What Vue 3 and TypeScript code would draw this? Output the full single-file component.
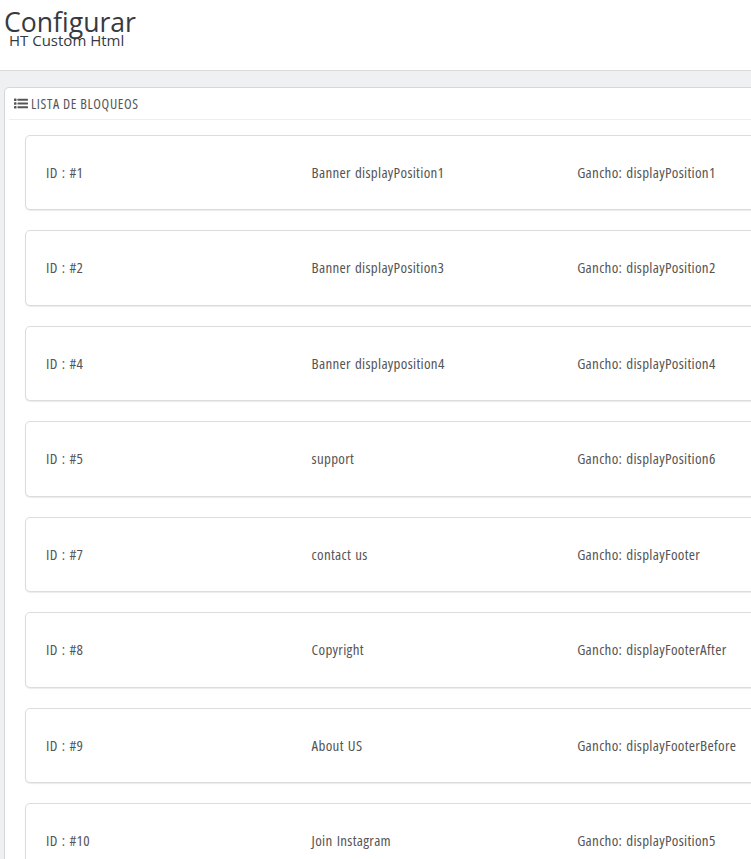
<script setup lang="ts">
interface Block { id: number; name: string; hook: string }
const blocks: Block[] = [
  { id: 1, name: 'Banner displayPosition1', hook: 'displayPosition1' },
  { id: 2, name: 'Banner displayPosition3', hook: 'displayPosition2' },
  { id: 4, name: 'Banner displayposition4', hook: 'displayPosition4' },
  { id: 5, name: 'support', hook: 'displayPosition6' },
  { id: 7, name: 'contact us', hook: 'displayFooter' },
  { id: 8, name: 'Copyright', hook: 'displayFooterAfter' },
  { id: 9, name: 'About US', hook: 'displayFooterBefore' },
  { id: 10, name: 'Join Instagram', hook: 'displayPosition5' },
]
</script>

<template>
  <div class="page">
    <header class="head">
      <h1>Configurar</h1>
      <p>HT Custom Html</p>
    </header>
    <main class="content">
      <section class="panel">
        <div class="panel-head">
          <svg class="icon" width="14" height="11" viewBox="0 0 14 11" aria-hidden="true">
            <rect x="0" y="0.5" width="2.5" height="2.5" rx="0.6" />
            <rect x="0" y="4.25" width="2.5" height="2.5" rx="0.6" />
            <rect x="0" y="8" width="2.5" height="2.5" rx="0.6" />
            <rect x="3.5" y="0.75" width="10.5" height="2" rx="0.4" />
            <rect x="3.5" y="4.5" width="10.5" height="2" rx="0.4" />
            <rect x="3.5" y="8.25" width="10.5" height="2" rx="0.4" />
          </svg>
          <span>LISTA DE BLOQUEOS</span>
        </div>
        <div class="list">
          <article v-for="b in blocks" :key="b.id" class="row">
            <div class="cell">ID : #{{ b.id }}</div>
            <div class="cell">{{ b.name }}</div>
            <div class="cell">Gancho: {{ b.hook }}</div>
          </article>
        </div>
      </section>
    </main>
  </div>
</template>

<style>
html, body { margin: 0; background: #fff; }
</style>

<style scoped>
.page {
  width: 751px;
  height: 859px;
  overflow: hidden;
  background: #eff0f2;
}
.head {
  height: 70px;
  background: #fff;
  border-bottom: 1px solid #d9dadc;
  font-family: "Open Sans", sans-serif;
  color: #363a41;
  position: relative;
}
.head h1 {
  margin: 0;
  padding: 4px 0 0 4px;
  font-size: 26.6px;
  line-height: 36px;
  font-weight: 400;
}
.head p {
  margin: -10px 0 0 9px;
  font-size: 15px;
  line-height: 20px;
}
.content {
  padding: 16px 0 0 4px;
}
.panel {
  width: 860px;
  background: #fff;
  border: 1px solid #d3d8db;
  border-radius: 5px 0 0 0;
  padding: 0 0 0 4px;
  box-sizing: border-box;
  height: 790px;
}
.panel-head {
  display: flex;
  align-items: center;
  gap: 3px;
  height: 31px;
  border-bottom: 1px solid #eeeeee;
  padding-left: 5px;
  font-family: "Ubuntu Condensed", "Liberation Sans Narrow", "Open Sans", sans-serif;
  font-stretch: condensed;
  font-size: 14px;
  letter-spacing: 0.65px;
  color: #555;
}
.icon { fill: #555; flex: none; }
.list {
  padding: 14.75px 0 0 16px;
  display: flex;
  flex-direction: column;
  gap: 20px;
}
.row {
  display: grid;
  grid-template-columns: repeat(3, 265.6px);
  width: 839px;
  height: 75.5px;
  box-sizing: border-box;
  padding: 0 20px 1.5px;
  align-items: center;
  background: #fff;
  border: 1px solid #dcdcdc;
  border-radius: 5px;
  box-shadow: 0 1px 1px rgba(0, 0, 0, 0.08);
  font-family: "Ubuntu Condensed", "Liberation Sans Narrow", "Open Sans", sans-serif;
  font-stretch: condensed;
  font-size: 15px;
  letter-spacing: 0.3px;
  word-spacing: 1px;
  color: #555;
}
</style>
